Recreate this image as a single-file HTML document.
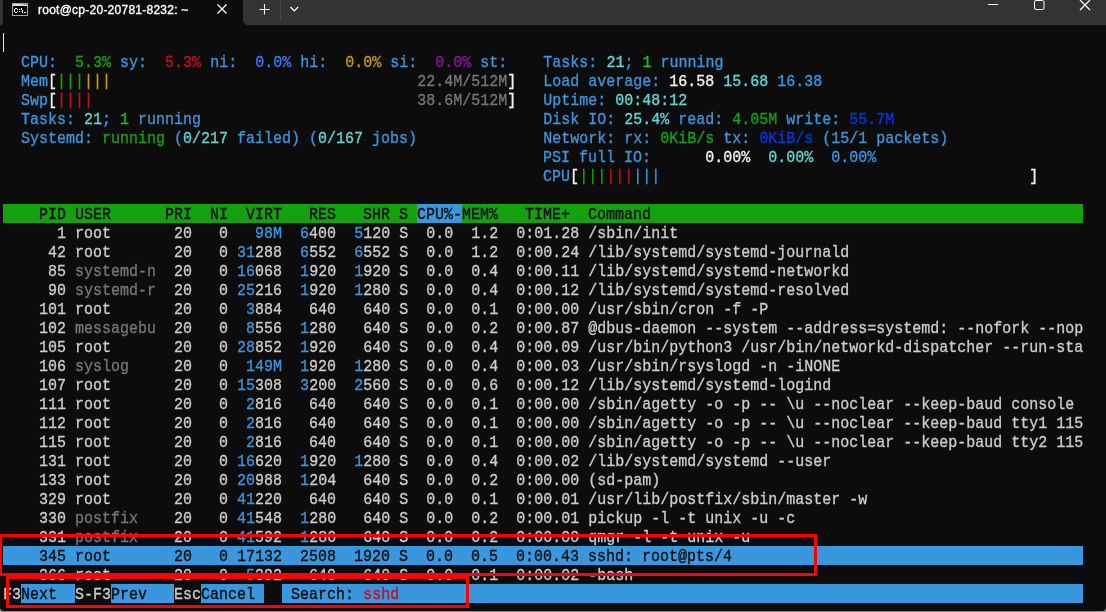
<!DOCTYPE html>
<html><head><meta charset="utf-8">
<style>
html,body{margin:0;padding:0;}
body{width:1106px;height:612px;overflow:hidden;background:#8f8f8f;position:relative;}
#win{position:absolute;left:0;top:0;width:1106px;height:611px;background:#0c0c0c;border-radius:0 0 4px 4px;overflow:hidden;}
#tabrow{position:absolute;left:243px;top:0;width:863px;height:25px;background:#333333;border-bottom-left-radius:5px;}
#tabl{position:absolute;left:0;top:0;width:3px;height:25px;background:#333333;border-bottom-right-radius:3px;}
#title{position:absolute;left:38px;top:0.3px;font:12px/20px "Liberation Sans",sans-serif;color:#ffffff;white-space:pre;-webkit-text-stroke:0.35px #ffffff;will-change:transform;letter-spacing:0.25px;}
.row{position:absolute;left:3px;height:19px;font:15px/19px "Liberation Mono",monospace;white-space:pre;color:#cccccc;transform-origin:0 0;transform:translateY(0.67px) scaleY(1.1);will-change:transform;-webkit-text-stroke:0.3px currentColor;}
.bg{position:absolute;height:19px;}
#cursor{position:absolute;left:3px;top:33px;width:1px;height:19px;background:#e8e8e8;}
.redbox{position:absolute;border:3px solid #ff0000;box-sizing:border-box;}
svg{position:absolute;overflow:visible;}
</style></head><body>
<div id="win">
<div id="tabl"></div>
<div id="tabrow"></div>
<svg style="left:12px;top:3px" width="16" height="13" viewBox="0 0 16 13" shape-rendering="crispEdges">
<rect x="0" y="0" width="16" height="13" fill="#9da1ab"/>
<rect x="1" y="1" width="14" height="2" fill="#d9dde6"/>
<rect x="10" y="1" width="1" height="1" fill="#6a7690"/><rect x="12" y="1" width="1" height="1" fill="#6a7690"/><rect x="14" y="1" width="1" height="1" fill="#6a7690"/>
<rect x="1" y="3" width="14" height="9" fill="#000000"/>
<rect x="3" y="5" width="2" height="1" fill="#fff"/><rect x="2" y="6" width="1" height="3" fill="#fff"/><rect x="3" y="9" width="2" height="1" fill="#fff"/>
<rect x="5" y="6" width="1" height="1" fill="#fff"/><rect x="5" y="8" width="1" height="1" fill="#fff"/>
<rect x="7" y="6" width="1" height="1" fill="#fff"/><rect x="7" y="8" width="1" height="1" fill="#fff"/>
<rect x="9" y="5" width="1" height="2" fill="#fff"/><rect x="10" y="7" width="1" height="3" fill="#fff"/>
<rect x="12" y="9" width="2" height="1" fill="#fff"/>
</svg>
<div id="title">root@cp-20-20781-8232: ~</div>
<svg style="left:217px;top:4px" width="10" height="10" viewBox="0 0 10 10"><path d="M0.5 0.5L9.5 9.5M9.5 0.5L0.5 9.5" stroke="#ffffff" stroke-width="1.3"/></svg>
<svg style="left:259px;top:4px" width="11" height="11" viewBox="0 0 11 11"><path d="M5.5 0V10.5M0.5 5.5H10.5" stroke="#ffffff" stroke-width="1.1"/></svg>
<div style="position:absolute;left:280px;top:0;width:1px;height:21px;background:#454545"></div>
<svg style="left:290px;top:6px" width="9" height="6" viewBox="0 0 9 6"><path d="M0.5 1L4.3 4.8L8.1 1" stroke="#ffffff" stroke-width="1.2" fill="none"/></svg>
<div style="position:absolute;left:988px;top:4px;width:10px;height:1px;background:#ffffff"></div>
<svg style="left:1034px;top:0px" width="11" height="11" viewBox="0 0 11 11"><rect x="0.5" y="0.5" width="9.5" height="9" rx="1.5" stroke="#ffffff" stroke-width="1" fill="none"/></svg>
<svg style="left:1080px;top:-0.5px" width="11" height="11" viewBox="0 0 11 11"><path d="M0 0L10 10M10 0L0 10" stroke="#ffffff" stroke-width="1.2"/></svg>
<div id="cursor"></div>
<div class="bg" style="left:3px;top:204px;width:414px;background:#13a10e"></div>
<div class="bg" style="left:417px;top:204px;width:45px;background:#3a96dd"></div>
<div class="bg" style="left:462px;top:204px;width:621px;background:#13a10e"></div>
<div class="bg" style="left:3px;top:546px;width:1080px;background:#3a96dd"></div>
<div class="bg" style="left:21px;top:584px;width:54px;background:#3a96dd"></div>
<div class="bg" style="left:111px;top:584px;width:63px;background:#3a96dd"></div>
<div class="bg" style="left:201px;top:584px;width:63px;background:#3a96dd"></div>
<div class="bg" style="left:282px;top:584px;width:81px;background:#3a96dd"></div>
<div class="bg" style="left:363px;top:584px;width:36px;background:#3a96dd"></div>
<div class="bg" style="left:399px;top:584px;width:684px;background:#3a96dd"></div>
<div class="row" style="top:52px">  <span style="color:#3a96dd">CPU:</span><span style="color:#cccccc">  </span><span style="color:#13a10e">5.3%</span><span style="color:#cccccc"> </span><span style="color:#3a96dd">sy:</span><span style="color:#cccccc">  </span><span style="color:#c50f1f">5.3%</span><span style="color:#cccccc"> </span><span style="color:#3a96dd">ni:</span><span style="color:#cccccc">  </span><span style="color:#3b78ff">0.0%</span><span style="color:#cccccc"> </span><span style="color:#3a96dd">hi:</span><span style="color:#cccccc">  </span><span style="color:#c19c00">0.0%</span><span style="color:#cccccc"> </span><span style="color:#3a96dd">si:</span><span style="color:#cccccc">  </span><span style="color:#881798">0.0%</span><span style="color:#cccccc"> </span><span style="color:#3a96dd">st:</span>    <span style="color:#3a96dd">Tasks: </span><span style="color:#61d6d6">21</span><span style="color:#3a96dd">; </span><span style="color:#16c60c">1</span><span style="color:#3a96dd"> running</span></div>
<div class="row" style="top:71px">  <span style="color:#3a96dd">Mem</span><span style="color:#f2f2f2">[</span><span style="color:#13a10e">|||</span><span style="color:#c19c00">|||</span>                                  <span style="color:#767676">22.4M/512M</span><span style="color:#f2f2f2">]</span>   <span style="color:#3a96dd">Load average: </span><span style="color:#f2f2f2">16.58 </span><span style="color:#61d6d6">15.68 </span><span style="color:#3a96dd">16.38</span></div>
<div class="row" style="top:90px">  <span style="color:#3a96dd">Swp</span><span style="color:#f2f2f2">[</span><span style="color:#c50f1f">||||</span>                                    <span style="color:#767676">38.6M/512M</span><span style="color:#f2f2f2">]</span>   <span style="color:#3a96dd">Uptime: </span><span style="color:#61d6d6">00:48:12</span></div>
<div class="row" style="top:109px">  <span style="color:#3a96dd">Tasks: </span><span style="color:#61d6d6">21</span><span style="color:#3a96dd">; </span><span style="color:#16c60c">1</span><span style="color:#3a96dd"> running</span>                                      <span style="color:#3a96dd">Disk IO: </span><span style="color:#61d6d6">25.4%</span><span style="color:#3a96dd"> read: </span><span style="color:#13a10e">4.05M</span><span style="color:#3a96dd"> write: </span><span style="color:#0037da">55.7M</span></div>
<div class="row" style="top:128px">  <span style="color:#3a96dd">Systemd: </span><span style="color:#13a10e">running</span><span style="color:#3a96dd"> (</span><span style="color:#61d6d6">0/217</span><span style="color:#3a96dd"> failed) (</span><span style="color:#61d6d6">0/167</span><span style="color:#3a96dd"> jobs)</span>              <span style="color:#3a96dd">Network: rx: </span><span style="color:#13a10e">0KiB/s</span><span style="color:#3a96dd"> tx: </span><span style="color:#0037da">0KiB/s</span><span style="color:#3a96dd"> (15/1 packets)</span></div>
<div class="row" style="top:147px">                                                            <span style="color:#3a96dd">PSI full IO:</span><span style="color:#cccccc">      </span><span style="color:#f2f2f2">0.00%</span><span style="color:#cccccc">  </span><span style="color:#61d6d6">0.00%</span><span style="color:#cccccc">  </span><span style="color:#3a96dd">0.00%</span></div>
<div class="row" style="top:166px">                                                            <span style="color:#3a96dd">CPU</span><span style="color:#f2f2f2">[</span><span style="color:#13a10e">|||</span><span style="color:#c50f1f">|||</span><span style="color:#3a96dd">|||</span>                                         <span style="color:#f2f2f2">]</span></div>
<div class="row" style="top:204px"><span style="color:#0c0c0c">    PID USER      PRI  NI  VIRT   RES   SHR S </span><span style="color:#0c0c0c">CPU%-</span><span style="color:#0c0c0c">MEM%   TIME+  Command                                                </span></div>
<div class="row" style="top:223px"><span style="color:#cccccc">      1 </span><span style="color:#cccccc">root     </span> <span style="color:#cccccc"> 20   0 </span><span style="color:#3a96dd">  98M</span> <span style="color:#3a96dd"> 6</span><span style="color:#cccccc">400</span> <span style="color:#3a96dd"> 5</span><span style="color:#cccccc">120</span> <span style="color:#cccccc">S  0.0  1.2  0:01.28 /sbin/init</span></div>
<div class="row" style="top:242px"><span style="color:#cccccc">     42 </span><span style="color:#cccccc">root     </span> <span style="color:#cccccc"> 20   0 </span><span style="color:#3a96dd">31</span><span style="color:#cccccc">288</span> <span style="color:#3a96dd"> 6</span><span style="color:#cccccc">552</span> <span style="color:#3a96dd"> 6</span><span style="color:#cccccc">552</span> <span style="color:#cccccc">S  0.0  1.2  0:00.24 /lib/systemd/systemd-journald</span></div>
<div class="row" style="top:261px"><span style="color:#cccccc">     85 </span><span style="color:#767676">systemd-n</span> <span style="color:#cccccc"> 20   0 </span><span style="color:#3a96dd">16</span><span style="color:#cccccc">068</span> <span style="color:#3a96dd"> 1</span><span style="color:#cccccc">920</span> <span style="color:#3a96dd"> 1</span><span style="color:#cccccc">920</span> <span style="color:#cccccc">S  0.0  0.4  0:00.11 /lib/systemd/systemd-networkd</span></div>
<div class="row" style="top:280px"><span style="color:#cccccc">     90 </span><span style="color:#767676">systemd-r</span> <span style="color:#cccccc"> 20   0 </span><span style="color:#3a96dd">25</span><span style="color:#cccccc">216</span> <span style="color:#3a96dd"> 1</span><span style="color:#cccccc">920</span> <span style="color:#3a96dd"> 1</span><span style="color:#cccccc">280</span> <span style="color:#cccccc">S  0.0  0.4  0:00.12 /lib/systemd/systemd-resolved</span></div>
<div class="row" style="top:299px"><span style="color:#cccccc">    101 </span><span style="color:#cccccc">root     </span> <span style="color:#cccccc"> 20   0 </span><span style="color:#3a96dd"> 3</span><span style="color:#cccccc">884</span> <span style="color:#cccccc">  640</span> <span style="color:#cccccc">  640</span> <span style="color:#cccccc">S  0.0  0.1  0:00.00 /usr/sbin/cron -f -P</span></div>
<div class="row" style="top:318px"><span style="color:#cccccc">    102 </span><span style="color:#767676">messagebu</span> <span style="color:#cccccc"> 20   0 </span><span style="color:#3a96dd"> 8</span><span style="color:#cccccc">556</span> <span style="color:#3a96dd"> 1</span><span style="color:#cccccc">280</span> <span style="color:#cccccc">  640</span> <span style="color:#cccccc">S  0.0  0.2  0:00.87 @dbus-daemon --system --address=systemd: --nofork --nop</span></div>
<div class="row" style="top:337px"><span style="color:#cccccc">    105 </span><span style="color:#cccccc">root     </span> <span style="color:#cccccc"> 20   0 </span><span style="color:#3a96dd">28</span><span style="color:#cccccc">852</span> <span style="color:#3a96dd"> 1</span><span style="color:#cccccc">920</span> <span style="color:#cccccc">  640</span> <span style="color:#cccccc">S  0.0  0.4  0:00.09 /usr/bin/python3 /usr/bin/networkd-dispatcher --run-sta</span></div>
<div class="row" style="top:356px"><span style="color:#cccccc">    106 </span><span style="color:#767676">syslog   </span> <span style="color:#cccccc"> 20   0 </span><span style="color:#3a96dd"> 149M</span> <span style="color:#3a96dd"> 1</span><span style="color:#cccccc">920</span> <span style="color:#3a96dd"> 1</span><span style="color:#cccccc">280</span> <span style="color:#cccccc">S  0.0  0.4  0:00.03 /usr/sbin/rsyslogd -n -iNONE</span></div>
<div class="row" style="top:375px"><span style="color:#cccccc">    107 </span><span style="color:#cccccc">root     </span> <span style="color:#cccccc"> 20   0 </span><span style="color:#3a96dd">15</span><span style="color:#cccccc">308</span> <span style="color:#3a96dd"> 3</span><span style="color:#cccccc">200</span> <span style="color:#3a96dd"> 2</span><span style="color:#cccccc">560</span> <span style="color:#cccccc">S  0.0  0.6  0:00.12 /lib/systemd/systemd-logind</span></div>
<div class="row" style="top:394px"><span style="color:#cccccc">    111 </span><span style="color:#cccccc">root     </span> <span style="color:#cccccc"> 20   0 </span><span style="color:#3a96dd"> 2</span><span style="color:#cccccc">816</span> <span style="color:#cccccc">  640</span> <span style="color:#cccccc">  640</span> <span style="color:#cccccc">S  0.0  0.1  0:00.00 /sbin/agetty -o -p -- \u --noclear --keep-baud console</span></div>
<div class="row" style="top:413px"><span style="color:#cccccc">    112 </span><span style="color:#cccccc">root     </span> <span style="color:#cccccc"> 20   0 </span><span style="color:#3a96dd"> 2</span><span style="color:#cccccc">816</span> <span style="color:#cccccc">  640</span> <span style="color:#cccccc">  640</span> <span style="color:#cccccc">S  0.0  0.1  0:00.00 /sbin/agetty -o -p -- \u --noclear --keep-baud tty1 115</span></div>
<div class="row" style="top:432px"><span style="color:#cccccc">    115 </span><span style="color:#cccccc">root     </span> <span style="color:#cccccc"> 20   0 </span><span style="color:#3a96dd"> 2</span><span style="color:#cccccc">816</span> <span style="color:#cccccc">  640</span> <span style="color:#cccccc">  640</span> <span style="color:#cccccc">S  0.0  0.1  0:00.00 /sbin/agetty -o -p -- \u --noclear --keep-baud tty2 115</span></div>
<div class="row" style="top:451px"><span style="color:#cccccc">    131 </span><span style="color:#cccccc">root     </span> <span style="color:#cccccc"> 20   0 </span><span style="color:#3a96dd">16</span><span style="color:#cccccc">620</span> <span style="color:#3a96dd"> 1</span><span style="color:#cccccc">920</span> <span style="color:#3a96dd"> 1</span><span style="color:#cccccc">280</span> <span style="color:#cccccc">S  0.0  0.4  0:00.02 /lib/systemd/systemd --user</span></div>
<div class="row" style="top:470px"><span style="color:#cccccc">    133 </span><span style="color:#cccccc">root     </span> <span style="color:#cccccc"> 20   0 </span><span style="color:#3a96dd">20</span><span style="color:#cccccc">988</span> <span style="color:#3a96dd"> 1</span><span style="color:#cccccc">204</span> <span style="color:#cccccc">  640</span> <span style="color:#cccccc">S  0.0  0.2  0:00.00 (sd-pam)</span></div>
<div class="row" style="top:489px"><span style="color:#cccccc">    329 </span><span style="color:#cccccc">root     </span> <span style="color:#cccccc"> 20   0 </span><span style="color:#3a96dd">41</span><span style="color:#cccccc">220</span> <span style="color:#cccccc">  640</span> <span style="color:#cccccc">  640</span> <span style="color:#cccccc">S  0.0  0.1  0:00.01 /usr/lib/postfix/sbin/master -w</span></div>
<div class="row" style="top:508px"><span style="color:#cccccc">    330 </span><span style="color:#767676">postfix  </span> <span style="color:#cccccc"> 20   0 </span><span style="color:#3a96dd">41</span><span style="color:#cccccc">548</span> <span style="color:#3a96dd"> 1</span><span style="color:#cccccc">280</span> <span style="color:#cccccc">  640</span> <span style="color:#cccccc">S  0.0  0.2  0:00.01 pickup -l -t unix -u -c</span></div>
<div class="row" style="top:527px"><span style="color:#cccccc">    331 </span><span style="color:#767676">postfix  </span> <span style="color:#cccccc"> 20   0 </span><span style="color:#3a96dd">41</span><span style="color:#cccccc">592</span> <span style="color:#3a96dd"> 1</span><span style="color:#cccccc">280</span> <span style="color:#cccccc">  640</span> <span style="color:#cccccc">S  0.0  0.2  0:00.00 qmgr -l -t unix -u</span></div>
<div class="row" style="top:546px"><span style="color:#0c0c0c">    345 root       20   0 17132  2508  1920 S  0.0  0.5  0:00.43 sshd: root@pts/4                                       </span></div>
<div class="row" style="top:565px"><span style="color:#cccccc">    366 </span><span style="color:#cccccc">root     </span> <span style="color:#cccccc"> 20   0 </span><span style="color:#3a96dd"> 5</span><span style="color:#cccccc">392</span> <span style="color:#cccccc">  640</span> <span style="color:#cccccc">  640</span> <span style="color:#cccccc">S  0.0  0.1  0:00.02 -bash</span></div>
<div class="row" style="top:584px"><span style="color:#cccccc">F3</span><span style="color:#0c0c0c">Next  </span><span style="color:#cccccc">S-F3</span><span style="color:#0c0c0c">Prev   </span><span style="color:#cccccc">Esc</span><span style="color:#0c0c0c">Cancel </span><span style="color:#cccccc">  </span><span style="color:#0c0c0c"> Search: </span><span style="color:#c50f1f">sshd</span><span style="color:#0c0c0c">                                                                            </span></div>
<div class="redbox" style="left:-1px;top:534px;width:818px;height:42px"></div>
<div class="redbox" style="left:6px;top:576px;width:463px;height:32px"></div>
</div>
</body></html>
